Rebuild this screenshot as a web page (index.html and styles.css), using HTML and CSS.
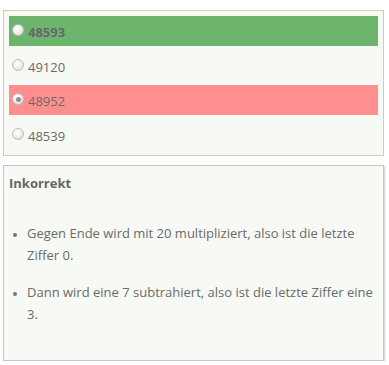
FILE: index.html
```html
<!DOCTYPE html>
<html lang="de">
<head>
<meta charset="utf-8">
<link rel="stylesheet" href="styles.css">
</head>
<body>
<div class="choices">
  <label class="row correct"><span class="radio"></span><span class="val bold">48593</span></label>
  <label class="row"><span class="radio"></span><span class="val">49120</span></label>
  <label class="row wrong"><span class="radio checked"></span><span class="val">48952</span></label>
  <label class="row"><span class="radio"></span><span class="val">48539</span></label>
</div>
<div class="feedback">
  <div class="title">Inkorrekt</div>
  <ul class="reasons">
    <li>Gegen Ende wird mit 20 multipliziert, also ist die letzte Ziffer 0.</li>
    <li>Dann wird eine 7 subtrahiert, also ist die letzte Ziffer eine 3.</li>
  </ul>
</div>
</body>
</html>
```
FILE: styles.css
```css
html, body { margin: 0; padding: 0; background: #fff; }
body {
  padding: 10px 5px 0 3px;
  font-family: "Open Sans", sans-serif;
  font-size: 13px;
  color: #6a6a6a;
}
.choices {
  border: 1px solid #c9d3a3;
  background: #f7f9f4;
  padding: 5px;
  display: flex;
  flex-direction: column;
  gap: 4.5px;
}
.row {
  height: 30px;
  display: flex;
  align-items: center;
  padding-left: 3px;
  gap: 4px;
}
.row.correct { background: #6db56d; }
.row.wrong { background: #ff8f8f; }
.radio {
  width: 12px;
  height: 12px;
  border-radius: 50%;
  box-sizing: border-box;
  border: 1px solid #bdbdbd;
  background: radial-gradient(circle at 40% 35%, #ffffff 0%, #f2f2f2 40%, #d8d8d8 100%);
  position: relative;
  top: -1px;
}
.radio.checked::after {
  content: "";
  position: absolute;
  left: 2.5px; top: 2.5px;
  width: 5px; height: 5px;
  border-radius: 50%;
  background: #909090;
}
.val { position: relative; top: 1px; }
.val.bold { font-weight: 700; color: #676767; }
.feedback {
  margin-top: 9.5px;
  border: 1px solid #c6c6c6;
  box-shadow: 1px 1px 2px rgba(0,0,0,0.18);
  background: #f7f9f4;
  padding: 6px 5px 35px 5px;
  line-height: 22px;
}
.title { font-weight: 700; color: #666; }
.reasons {
  margin: 28px 0 0 0;
  padding-left: 18px;
  display: flex;
  flex-direction: column;
  gap: 15px;
}
.reasons li { padding-left: 0; }
.reasons li::marker { font-size: 10px; color: #777; }
```
